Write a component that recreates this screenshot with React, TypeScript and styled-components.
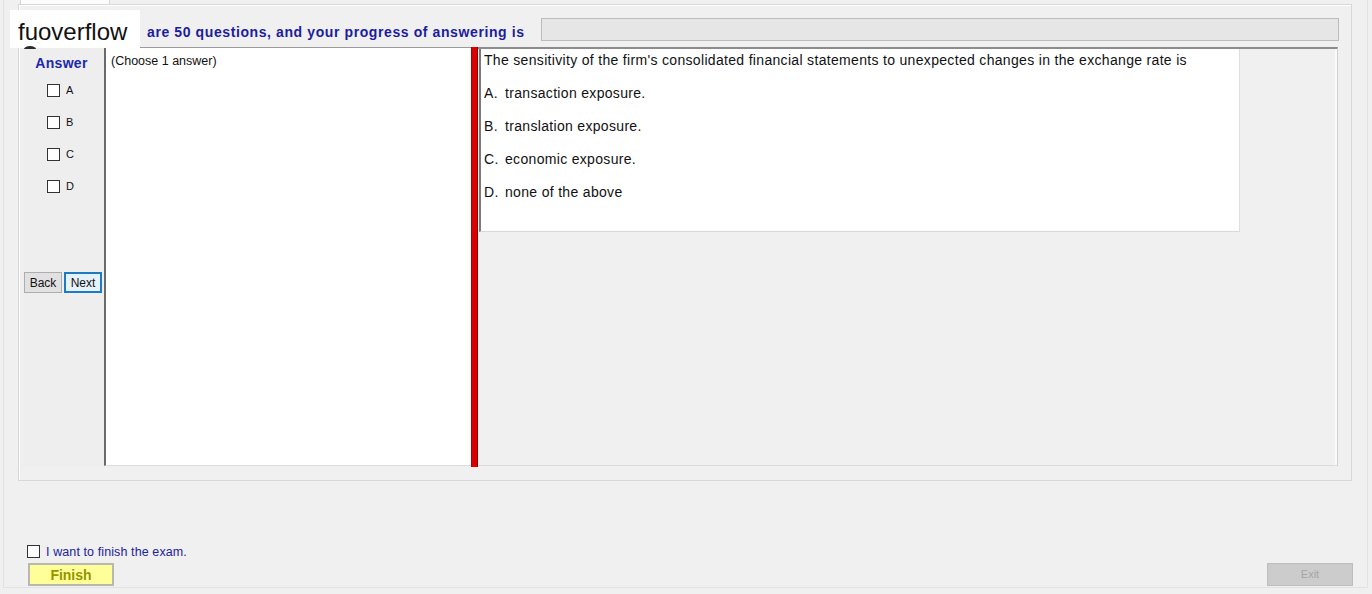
import React from "react";
import styled, { createGlobalStyle } from "styled-components";

const Global = createGlobalStyle`
  html, body { margin: 0; padding: 0; background: #f0f0f0; }
  body { font-family: "Liberation Sans", Arial, sans-serif; color: #000; }
  #root { width: 1372px; height: 594px; }
`;

const Window = styled.div`
  position: relative;
  width: 1372px;
  height: 594px;
  background: #f0f0f0;
  overflow: hidden;
`;

const Frame = styled.div`
  margin-left: 3px;
  width: 1365px;
  height: 588px;
  box-sizing: border-box;
  border: 1px solid #e2e2e2;
  border-top: none;
  display: flex;
  flex-direction: column;
`;

const TabStrip = styled.div`
  height: 4px;
  padding-left: 16px;
  display: flex;
`;

const Tab = styled.div`
  width: 90px;
  height: 4px;
  background: #fcfcfc;
  border-left: 1px solid #d4d4d4;
  border-right: 1px solid #d4d4d4;
  box-sizing: border-box;
`;

const TabPanel = styled.div`
  margin-left: 14px;
  width: 1334px;
  height: 477px;
  box-sizing: border-box;
  border: 1px solid #d8d8d8;
  box-shadow: inset 1px 1px 0 #ffffff;
  padding: 12px 13px 0 3px;
  display: flex;
  flex-direction: column;
`;

const Header = styled.div`
  height: 24px;
  display: flex;
  align-items: center;
  justify-content: space-between;
  padding-left: 125px;
`;

const Heading = styled.div`
  padding-top: 6px;
  font-size: 14px;
  font-weight: bold;
  letter-spacing: 0.6px;
  color: #1c1ca0;
  white-space: nowrap;
`;

const Progress = styled.div`
  width: 798px;
  height: 23px;
  margin-right: -1px;
  box-sizing: border-box;
  background: #e6e6e6;
  border: 1px solid #bcbcbc;
`;

const Body = styled.div`
  margin-top: 6px;
  height: 420px;
  display: flex;
`;

const AnswerCol = styled.div`
  width: 82px;
  background: #eeeeee;
  display: flex;
  flex-direction: column;
  padding-top: 8px;
  box-sizing: border-box;
`;

const AnswerTitle = styled.div`
  font-size: 14px;
  line-height: 16px;
  font-weight: bold;
  letter-spacing: 0.3px;
  color: #1c28b0;
  text-align: center;
  padding-right: 3px;
`;

const OptionList = styled.div`
  margin-top: 3px;
  padding-left: 25px;
  display: flex;
  flex-direction: column;
`;

const OptionRow = styled.label`
  height: 32px;
  display: flex;
  align-items: center;
  gap: 6px;
  font-size: 11px;
  color: #111;
`;

const Box = styled.span`
  width: 13px;
  height: 13px;
  box-sizing: border-box;
  background: #fff;
  border: 1px solid #333;
  display: inline-block;
  flex: none;
`;

const NavRow = styled.div`
  margin-top: 70px;
  padding-left: 2px;
  display: flex;
  gap: 2px;
`;

const NavButton = styled.button<{ $focused?: boolean }>`
  width: 38px;
  height: 21px;
  padding: 0;
  box-sizing: border-box;
  font-family: "Liberation Sans", Arial, sans-serif;
  font-size: 12px;
  color: #111;
  background: ${(p) => (p.$focused ? "#e5f1fb" : "#e1e1e1")};
  border: ${(p) => (p.$focused ? "2px solid #1f7ac4" : "1px solid #adadad")};
`;

const ChoiceBox = styled.div`
  width: 367px;
  height: 419px;
  box-sizing: border-box;
  background: #fff;
  border-left: 2px solid #6a6a6a;
  border-top: 1px solid #9a9a9a;
  border-bottom: 1px solid #dcdcdc;
  padding: 6px 0 0 5px;
  font-size: 12.5px;
  line-height: 15px;
  color: #111;
`;

const Splitter = styled.div`
  width: 7px;
  height: 420px;
  box-sizing: border-box;
  background: #dc0000;
  border-left: 1px solid #b00000;
  border-right: 1px solid #8a0000;
`;

const QuestionPane = styled.div`
  flex: 1;
  height: 419px;
  box-sizing: border-box;
  border-top: 2px solid #8c8c8c;
  border-right: 1px solid #d0d0d0;
  border-bottom: 1px solid #dcdcdc;
  box-shadow: inset -2px 0 0 #fafafa;
  padding-left: 1px;
`;

const QuestionBox = styled.div`
  width: 761px;
  height: 183px;
  box-sizing: border-box;
  background: #fff;
  border-left: 2px solid #7a7a7a;
  border-bottom: 1px solid #d8d8d8;
  border-right: 1px solid #dedede;
  padding: 3px 0 0 3px;
  font-size: 14px;
  line-height: 17px;
  letter-spacing: 0.32px;
  color: #111;
`;

const QLine = styled.div<{ $first?: boolean }>`
  margin-top: ${(p) => (p.$first ? "0" : "16px")};
  white-space: nowrap;
`;

const Letter = styled.span`
  display: inline-block;
  width: 21px;
`;

const CheckRow = styled.label`
  margin-top: 63px;
  padding-left: 23px;
  height: 14px;
  display: flex;
  align-items: center;
  gap: 6px;
  font-size: 12.5px;
  letter-spacing: 0.1px;
  color: #22229a;
`;

const LabelText = styled.span`
  padding-top: 2px;
`;

const ButtonRow = styled.div`
  margin-top: 5px;
  padding: 0 14px 0 24px;
  display: flex;
  justify-content: space-between;
`;

const FinishButton = styled.button`
  width: 86px;
  height: 23px;
  padding: 0;
  box-sizing: border-box;
  background: #ffff99;
  border: 2px solid #b8b8b0;
  font-family: "Liberation Sans", Arial, sans-serif;
  font-size: 14px;
  font-weight: bold;
  color: #959500;
`;

const ExitButton = styled.button`
  width: 86px;
  height: 23px;
  padding: 0 0 2px;
  box-sizing: border-box;
  background: #cccccc;
  border: 1px solid #bdbdbd;
  font-family: "Liberation Sans", Arial, sans-serif;
  font-size: 11px;
  color: #a6a6a6;
`;

const Watermark = styled.div`
  position: absolute;
  left: 10px;
  top: 10px;
  width: 130px;
  height: 38px;
  box-sizing: border-box;
  padding: 3px 0 0 8px;
  background: #fff;
  font-size: 24px;
  line-height: 38px;
  color: #111;
  z-index: 2;
`;

const IconPeek = styled.div`
  position: absolute;
  left: 24px;
  top: 46px;
  width: 12px;
  height: 6px;
  border-top: 3px solid #2a2a2a;
  border-radius: 50% 50% 0 0;
  box-sizing: border-box;
  z-index: 3;
`;

const options = ["A", "B", "C", "D"];
const answers = [
  ["A.", "transaction exposure."],
  ["B.", "translation exposure."],
  ["C.", "economic exposure."],
  ["D.", "none of the above"],
];

export default function App() {
  return (
    <Window>
      <Global />
      <Frame>
        <TabStrip>
          <Tab />
        </TabStrip>
        <TabPanel>
          <Header>
            <Heading>are 50 questions, and your progress of answering is</Heading>
            <Progress />
          </Header>
          <Body>
            <AnswerCol>
              <AnswerTitle>Answer</AnswerTitle>
              <OptionList>
                {options.map((o) => (
                  <OptionRow key={o}>
                    <Box />
                    {o}
                  </OptionRow>
                ))}
              </OptionList>
              <NavRow>
                <NavButton>Back</NavButton>
                <NavButton $focused>Next</NavButton>
              </NavRow>
            </AnswerCol>
            <ChoiceBox>(Choose 1 answer)</ChoiceBox>
            <Splitter />
            <QuestionPane>
              <QuestionBox>
                <QLine $first>
                  The sensitivity of the firm's consolidated financial statements to unexpected changes in the exchange rate is
                </QLine>
                {answers.map(([l, t]) => (
                  <QLine key={l}>
                    <Letter>{l}</Letter>
                    {t}
                  </QLine>
                ))}
              </QuestionBox>
            </QuestionPane>
          </Body>
        </TabPanel>
        <CheckRow>
          <Box />
          <LabelText>I want to finish the exam.</LabelText>
        </CheckRow>
        <ButtonRow>
          <FinishButton>Finish</FinishButton>
          <ExitButton>Exit</ExitButton>
        </ButtonRow>
      </Frame>
      <IconPeek />
      <Watermark>fuoverflow</Watermark>
    </Window>
  );
}
